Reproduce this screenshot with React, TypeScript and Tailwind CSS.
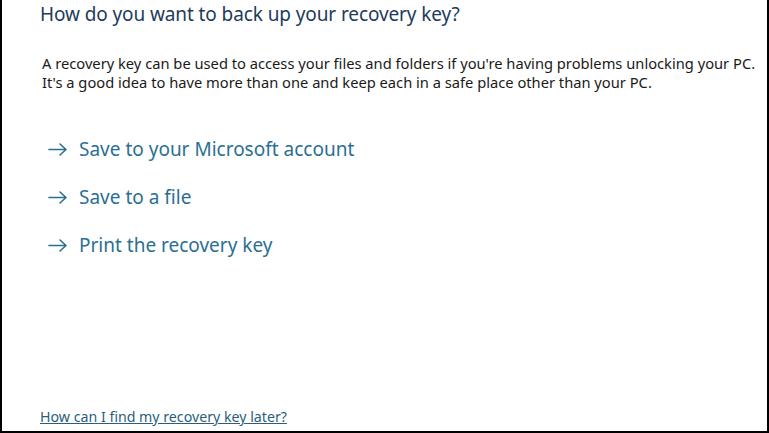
export default function App() {
  const links = ["Save to your Microsoft account", "Save to a file", "Print the recovery key"];
  return (
    <div
      className="w-[769px] h-[433px] bg-white border-l-2 border-r-2 border-b-2 border-black flex flex-col overflow-hidden"
      style={{ fontFamily: '"Noto Sans", "Open Sans", sans-serif' }}
    >
      <h1 className="ml-[38px] mt-[1px] text-[19px] leading-[26px] tracking-[-0.1px] text-[#1e3b5c]">
        How do you want to back up your recovery key?
      </h1>
      <p className="ml-[40px] mt-[27px] text-[14.7px] leading-[19px] text-[#1a1a1a]">
        A recovery key can be used to access your files and folders if you're having problems unlocking your PC.
        <br />
        It's a good idea to have more than one and keep each in a safe place other than your PC.
      </p>
      <div className="ml-[45px] mt-[44px] flex flex-col gap-[22px]">
        {links.map((l) => (
          <div key={l} className="flex items-center gap-[11px] text-[19px] leading-[26px] text-[#2a6f93]">
            <svg width="21" height="14" viewBox="0 0 21 14" fill="none" stroke="#2a6f93" strokeWidth="1.6" strokeLinecap="round" strokeLinejoin="round">
              <path d="M2 7.5h17M13 2l6 5.5-6 5.5" />
            </svg>
            <span>{l}</span>
          </div>
        ))}
      </div>
      <div className="mt-auto mb-[5px] ml-[38px] text-[14.2px] leading-[18px] text-[#2b5e7c] underline">
        How can I find my recovery key later?
      </div>
    </div>
  );
}
